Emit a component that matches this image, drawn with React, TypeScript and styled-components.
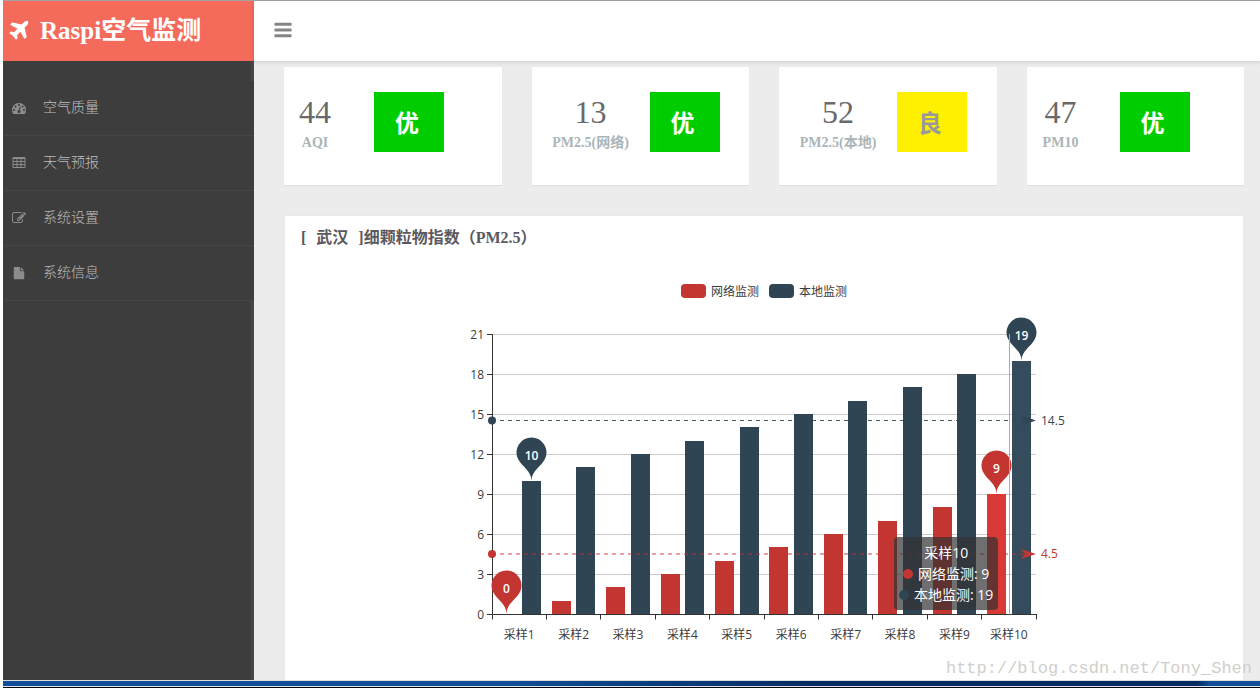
import React from 'react';
import styled, { createGlobalStyle } from 'styled-components';

const RED = '#c23531';
const NAVY = '#2f4554';
const songti = `'Liberation Serif', 'Noto Sans CJK SC', serif`;
const yahei = `'Open Sans', 'Noto Sans CJK SC', sans-serif`;

const GlobalStyle = createGlobalStyle`
  * { box-sizing: border-box; }
  body { margin: 0; background: #fff; font-family: ${songti}; }
  h1, h2, p, ul { margin: 0; padding: 0; }
`;

const Page = styled.div`
  position: relative;
  display: flex;
  flex-direction: column;
  min-height: 100vh;
  padding-left: 3px;
`;

const Body = styled.div`
  flex: 1;
  display: flex;
  border-top: 1px solid #a3a3a3;
`;

const Sidebar = styled.aside`
  flex: none;
  width: 251px;
  display: flex;
  flex-direction: column;
  background: linear-gradient(to right, transparent calc(100% - 5px), #4a4a4a) #3d3d3d;
`;

const Brand = styled.h1`
  display: flex;
  align-items: center;
  gap: 9px;
  height: 60px;
  margin-bottom: 20px;
  padding-left: 4px;
  background: #f56b5b;
  color: #fff;
  font-size: 25px;
  font-weight: 700;
  line-height: 32px;
`;

const Menu = styled.ul`
  list-style: none;
  background: #3d3d3d;
`;

const MenuLink = styled.a`
  display: flex;
  align-items: center;
  gap: 17px;
  height: 55px;
  padding: 0 0 1px 9px;
  border-bottom: 1px solid #464646;
  color: #bdbdbd;
  font-size: 14px;
  font-weight: 300;
  line-height: 20px;
  text-decoration: none;

  svg { color: #8c8c8c; }
`;

const Main = styled.main`
  flex: 1;
  min-width: 0;
  display: flex;
  flex-direction: column;
  background: #ececec;
`;

const TopBar = styled.header`
  display: flex;
  align-items: center;
  height: 60px;
  padding: 0 0 2px 19px;
  background: #fff;
  box-shadow: 0 1px 4px rgba(0, 0, 0, 0.14);
`;

const MenuToggle = styled.button`
  display: flex;
  padding: 0;
  border: 0;
  background: none;
  color: #858585;
`;

const Content = styled.div`
  flex: 1;
  display: flex;
  flex-direction: column;
  gap: 30px;
  padding: 6px 16px 0 30px;
`;

const Cards = styled.section`
  display: grid;
  grid-template-columns: repeat(4, 1fr);
  gap: 30px;
`;

const Card = styled.article`
  display: flex;
  height: 118px;
  padding-top: 25px;
  background: #fff;
  box-shadow: 0 1px 1px rgba(0, 0, 0, 0.06);
`;

const Reading = styled.div<{ $width: number }>`
  flex: none;
  width: ${(p) => p.$width}px;
  text-align: center;
  white-space: nowrap;
`;

const Value = styled.p`
  color: #6a6a6a;
  font-size: 32px;
  line-height: 40px;
`;

const Label = styled.p`
  color: #aab5b7;
  font-size: 14px;
  font-weight: 700;
  line-height: 22px;
`;

const Grade = styled.div<{ $fair?: boolean; $gap: number }>`
  flex: none;
  width: 70px;
  height: 60px;
  margin-left: ${(p) => p.$gap}px;
  padding-right: 4px;
  background: ${(p) => (p.$fair ? '#fff000' : '#00cd00')};
  color: ${(p) => (p.$fair ? '#999' : '#fff')};
  font: 700 24px/62px ${yahei};
  text-align: center;
`;

const Panel = styled.section`
  flex: 1;
  display: flex;
  flex-direction: column;
  padding: 10px 0 20px;
  border: 1px solid #e9e9e9;
  border-bottom: 0;
  background: #fff;
`;

const PanelTitle = styled.h2`
  padding-left: 16px;
  color: #5c5860;
  font-size: 16px;
  font-weight: 700;
  line-height: 24px;
`;

const City = styled.span`
  padding: 0 6px;
`;

const Chart = styled.figure`
  position: relative;
  width: 700px;
  margin: 34px auto 0;
  font-family: ${yahei};

  > svg { display: block; font-size: 12px; }
`;

const Legend = styled.figcaption`
  display: flex;
  justify-content: center;
  gap: 10px;
  margin-bottom: 11px;
`;

const LegendItem = styled.span<{ $color: string }>`
  display: flex;
  align-items: flex-start;
  gap: 5px;
  color: #3c3c3c;
  font-size: 12px;
  line-height: 15px;

  &::before {
    content: '';
    width: 25px;
    height: 14px;
    border-radius: 4px;
    background: ${(p) => p.$color};
  }
`;

const Tooltip = styled.div`
  position: absolute;
  left: 480px;
  top: 253px;
  padding: 5px;
  border-radius: 4px;
  background: rgba(50, 50, 50, 0.7);
  color: #fff;
  font-size: 14px;
  line-height: 21px;
  text-align: center;
  white-space: nowrap;
`;

const Dot = styled.span<{ $color: string }>`
  display: inline-block;
  width: 10px;
  height: 10px;
  margin-right: 5px;
  border-radius: 5px;
  background: ${(p) => p.$color};
`;

const Taskbar = styled.footer`
  height: 8px;
  border-top: 1px solid #dcdcdc;
  border-bottom: 1px solid #05060f;
  background: linear-gradient(to right, #114e97, #114e97 40%, #002b62 65%, #002b62 95%, #114e97 96%);
  box-shadow: inset 0 -1px #dfe3ea;
`;

const Watermark = styled.span`
  position: absolute;
  right: 8px;
  bottom: 9px;
  color: #cfcfca;
  font: 17px/20px 'Liberation Mono', monospace;
`;

const ICONS = {
  plane:
    'M1568 160q44 52 12 148t-108 172l-161 161 160 696q5 19-12 33l-128 96q-7 6-19 6-4 0-7-1-15-3-21-16l-279-508-259 259 53 194q5 17-8 31l-96 96q-9 9-23 9h-2q-15-2-24-13l-189-252-252-189q-11-7-13-23-1-13 9-25l96-97q9-9 23-9 6 0 8 1l194 53 259-259-508-279q-14-8-17-24-2-16 9-27l128-128q14-13 30-8l665 159 160-160q76-76 172-108t148 12z',
  gauge:
    'M384 1152q0-53-37.5-90.5t-90.5-37.5-90.5 37.5-37.5 90.5 37.5 90.5 90.5 37.5 90.5-37.5 37.5-90.5zm192-448q0-53-37.5-90.5t-90.5-37.5-90.5 37.5-37.5 90.5 37.5 90.5 90.5 37.5 90.5-37.5 37.5-90.5zm428 481l101-382q6-26-7.5-48.5t-38.5-29.5-48 6.5-30 39.5l-101 382q-60 5-107 43.5t-63 98.5q-20 77 20 146t117 89 146-20 89-117q16-60-6-117t-72-91zm660-33q0-53-37.5-90.5t-90.5-37.5-90.5 37.5-37.5 90.5 37.5 90.5 90.5 37.5 90.5-37.5 37.5-90.5zm-640-640q0-53-37.5-90.5t-90.5-37.5-90.5 37.5-37.5 90.5 37.5 90.5 90.5 37.5 90.5-37.5 37.5-90.5zm448 192q0-53-37.5-90.5t-90.5-37.5-90.5 37.5-37.5 90.5 37.5 90.5 90.5 37.5 90.5-37.5 37.5-90.5zm320 448q0 261-141 483-19 29-54 29h-1402q-35 0-54-29-141-221-141-483 0-182 71-348t191-286 286-191 348-71 348 71 286 191 191 286 71 348z',
  table:
    'M224 128h1344q66 0 113 47t47 113v1088q0 66-47 113t-113 47h-1344q-66 0-113-47t-47-113v-1088q0-66 47-113t113-47zM192 384v256h384v-256zM704 384v256h384v-256zM1216 384v256h384v-256zM192 768v256h384v-256zM704 768v256h384v-256zM1216 768v256h384v-256zM192 1152v256h384v-256zM704 1152v256h384v-256zM1216 1152v256h384v-256z',
  edit:
    'M888 1184l116-116-152-152-116 116v56h96v96h56zm440-720q-16-16-33 1l-350 350q-17 17-1 33t33-1l350-350q17-17 1-33zm80 594v190q0 119-84.5 203.5t-203.5 84.5h-832q-119 0-203.5-84.5t-84.5-203.5v-832q0-119 84.5-203.5t203.5-84.5h832q63 0 117 25 15 7 18 23 3 17-9 29l-49 49q-14 14-32 8-23-6-45-6h-832q-66 0-113 47t-47 113v832q0 66 47 113t113 47h832q66 0 113-47t47-113v-126q0-13 9-22l64-64q15-15 35-7t20 29zm-96-738l288 288-672 672h-288v-288zm444 132l-92 92-288-288 92-92q28-28 68-28t68 28l152 152q28 28 28 68t-28 68z',
  file:
    'M1152 512v-472q22 14 36 28l408 408q14 14 28 36h-472zm-128 32q0 40 28 68t68 28h544v1056q0 40-28 68t-68 28h-1344q-40 0-68-28t-28-68v-1600q0-40 28-68t68-28h800v544z',
  bars:
    'M1664 1344v128q0 26-19 45t-45 19h-1408q-26 0-45-19t-19-45v-128q0-26 19-45t45-19h1408q26 0 45 19t19 45zm0-512v128q0 26-19 45t-45 19h-1408q-26 0-45-19t-19-45v-128q0-26 19-45t45-19h1408q26 0 45 19t19 45zm0-512v128q0 26-19 45t-45 19h-1408q-26 0-45-19t-19-45v-128q0-26 19-45t45-19h1408q26 0 45 19t19 45z',
};

type IconName = keyof typeof ICONS;

// The file glyph is drawn taller than it is wide, so it uses its own box.
function Icon({ name, size }: { name: IconName; size: number }) {
  const box = name === 'file' ? '-128 -128 2048 2048' : '0 0 1792 1792';
  return (
    <svg width={size} height={size} viewBox={box} fill="currentColor" fillRule="evenodd" aria-hidden="true">
      <path d={ICONS[name]} />
    </svg>
  );
}

const menu: { icon: IconName; text: string }[] = [
  { icon: 'gauge', text: '空气质量' },
  { icon: 'table', text: '天气预报' },
  { icon: 'edit', text: '系统设置' },
  { icon: 'file', text: '系统信息' },
];

const readings = [
  { value: 44, label: 'AQI', grade: '优', width: 62, gap: 28 },
  { value: 13, label: 'PM2.5(网络)', grade: '优', width: 118, gap: 0 },
  { value: 52, label: 'PM2.5(本地)', grade: '良', width: 118, gap: 0 },
  { value: 47, label: 'PM10', grade: '优', width: 68, gap: 25 },
];

const network = [0, 1, 2, 3, 4, 5, 6, 7, 8, 9];
const local = [10, 11, 12, 13, 14, 15, 16, 17, 18, 19];

const LEFT = 78;
const TOP = 24;
const WIDTH = 544;
const HEIGHT = 280;
const MAX = 21;
const BAR = 19;
const band = WIDTH / network.length;
const yOf = (v: number) => TOP + HEIGHT - (v / MAX) * HEIGHT;
const barX = (i: number, series: number) => Math.round(LEFT + i * band + 5.4 + series * 24.6);
const snap = (n: number) => Math.floor(n) + 0.5;

const PIN =
  'M-13.55-22.14A15 15 0 1 1 13.55-22.14C9.7-14 0-10.5 0 0C0-10.5-9.7-14-13.55-22.14Z';

function Pin({ i, series, value, color }: { i: number; series: number; value: number; color: string }) {
  return (
    <g transform={`translate(${barX(i, series) + BAR / 2} ${Math.round(yOf(value))})`}>
      <path d={PIN} fill={color} />
      <text y={-21} fill="#fff" fontWeight={600} textAnchor="middle">{value}</text>
    </g>
  );
}

function AverageLine({ value, color, opacity }: { value: number; color: string; opacity: number }) {
  const y = Math.round(yOf(value) * 2) / 2;
  const end = LEFT + WIDTH;
  return (
    <g fill={color}>
      <path d={`M${LEFT} ${y}H${end - 12}`} stroke={color} strokeDasharray="4 4" opacity={opacity} />
      <circle cx={LEFT} cy={y} r={4} />
      <path d={`M${end} ${y}l-15-5 4 5-4 5z`} />
      <text x={end + 5} y={Math.round(y) + 4}>{value}</text>
    </g>
  );
}

function BarChart() {
  const ticks = [0, 3, 6, 9, 12, 15, 18, 21];
  const base = snap(yOf(0));
  const last = network.length - 1;
  return (
    <svg width="700" height="345" role="img" aria-label="PM2.5">
      {ticks.map((t) => {
        const y = snap(yOf(t));
        return (
          <g key={t}>
            <path d={`M${LEFT} ${y}h${WIDTH}`} stroke="#ccc" />
            <path d={`M${LEFT - 5} ${y}h5`} stroke="#333" />
            <text x={LEFT - 8} y={y + 4} fill="#3c3c3c" textAnchor="end">{t}</text>
          </g>
        );
      })}
      {network.map((v, i) => (
        <g key={i}>
          <rect x={barX(i, 0)} y={Math.round(yOf(v))} width={BAR} height={Math.round(TOP + HEIGHT - yOf(v))} fill={i === last ? '#d93a35' : RED} />
          <rect x={barX(i, 1)} y={Math.round(yOf(local[i]))} width={BAR} height={Math.round(TOP + HEIGHT - yOf(local[i]))} fill={i === last ? '#344c5c' : NAVY} />
          <text x={LEFT + (i + 0.5) * band} y={base + 24} fill="#3c3c3c" textAnchor="middle">{`采样${i + 1}`}</text>
        </g>
      ))}
      <path d={`M${LEFT + 0.5} ${TOP}V${base}H${LEFT + WIDTH + 1}`} fill="none" stroke="#333" />
      {Array.from({ length: network.length + 1 }, (_, i) => (
        <path key={i} d={`M${snap(LEFT + i * band)} ${base}v5`} stroke="#333" />
      ))}
      <AverageLine value={4.5} color={RED} opacity={0.9} />
      <AverageLine value={14.5} color={NAVY} opacity={0.9} />
      <Pin i={last} series={0} value={9} color={RED} />
      <Pin i={0} series={0} value={0} color={RED} />
      <Pin i={last} series={1} value={19} color={NAVY} />
      <Pin i={0} series={1} value={10} color={NAVY} />
      <path d={`M${snap(LEFT + (last + 0.5) * band) + 1} ${TOP}V${base}`} stroke="#aaa" />
    </svg>
  );
}

export default function App() {
  return (
    <Page>
      <GlobalStyle />
      <Body>
        <Sidebar>
          <Brand>
            <Icon name="plane" size={24} />
            Raspi空气监测
          </Brand>
          <nav>
            <Menu>
              {menu.map((m) => (
                <li key={m.text}>
                  <MenuLink href="#">
                    <Icon name={m.icon} size={14} />
                    {m.text}
                  </MenuLink>
                </li>
              ))}
            </Menu>
          </nav>
        </Sidebar>
        <Main>
          <TopBar>
            <MenuToggle type="button" aria-label="菜单">
              <Icon name="bars" size={20} />
            </MenuToggle>
          </TopBar>
          <Content>
            <Cards>
              {readings.map((r) => (
                <Card key={r.label}>
                  <Reading $width={r.width}>
                    <Value>{r.value}</Value>
                    <Label>{r.label}</Label>
                  </Reading>
                  <Grade $gap={r.gap} $fair={r.grade === '良'}>{r.grade}</Grade>
                </Card>
              ))}
            </Cards>
            <Panel>
              <PanelTitle>
                [<City> 武汉 </City>]细颗粒物指数（PM2.5）
              </PanelTitle>
              <Chart>
                <Legend>
                  <LegendItem $color={RED}>网络监测</LegendItem>
                  <LegendItem $color={NAVY}>本地监测</LegendItem>
                </Legend>
                <BarChart />
                <Tooltip>
                  <div>采样10</div>
                  <div><Dot $color={RED} />网络监测: 9</div>
                  <div><Dot $color={NAVY} />本地监测: 19</div>
                </Tooltip>
              </Chart>
            </Panel>
          </Content>
        </Main>
      </Body>
      <Taskbar />
      <Watermark>http://blog.csdn.net/Tony_Shen</Watermark>
    </Page>
  );
}
